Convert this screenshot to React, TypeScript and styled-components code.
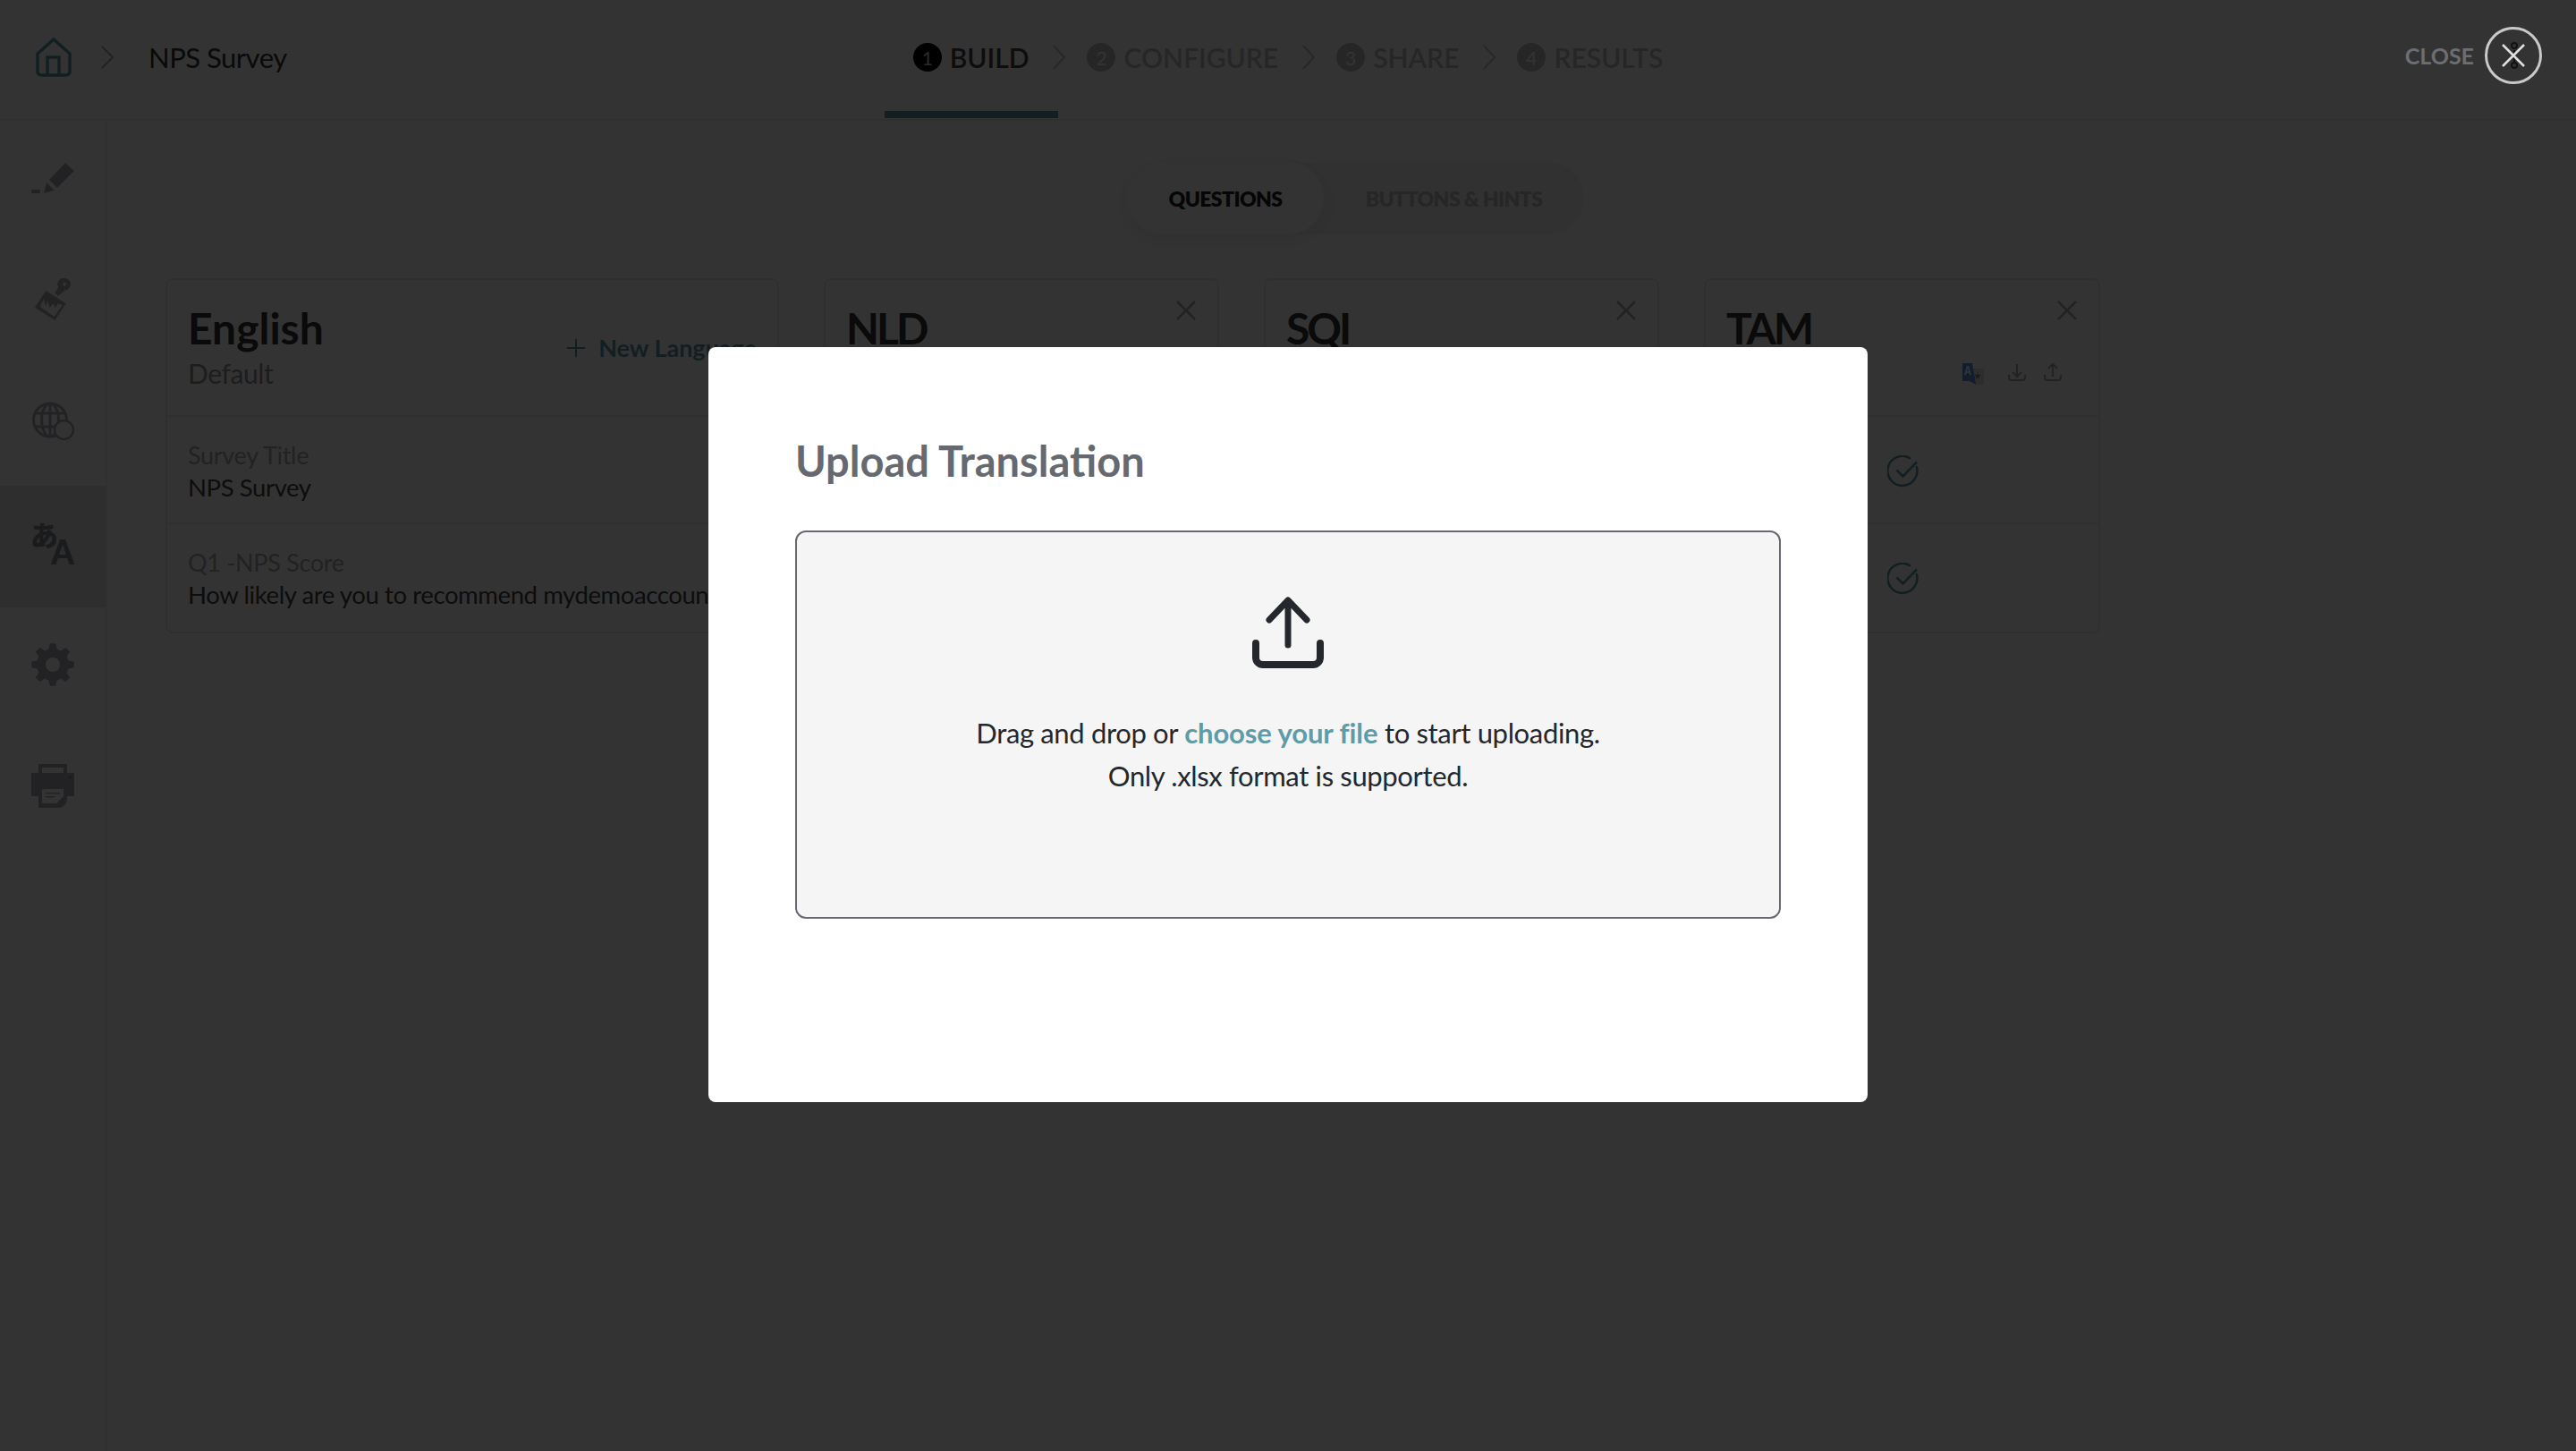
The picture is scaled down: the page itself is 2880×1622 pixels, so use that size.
import React from "react";
import styled, { createGlobalStyle } from "styled-components";

const FONT = `"Lato", "Noto Sans", "Liberation Sans", sans-serif`;

const Global = createGlobalStyle`
  html, body { margin: 0; padding: 0; background: #fff; }
  * { box-sizing: border-box; }
  body { font-family: ${FONT}; }
`;

const Page = styled.div`
  position: relative;
  width: 2880px;
  height: 1622px;
  overflow: hidden;
  background: #fff;
  display: flex;
  flex-direction: column;
`;

const Header = styled.header`
  height: 135px;
  flex: none;
  display: grid;
  grid-template-columns: 1fr auto 1fr;
  align-items: start;
  border-bottom: 2px solid #eee;
`;

const Crumbs = styled.div`
  display: flex;
  align-items: center;
  height: 128px;
  padding-left: 40px;
`;

const CrumbChevron = styled.svg`
  margin-left: 33px;
`;

const CrumbTitle = styled.span`
  font-size: 31px;
  color: #333;
  margin-left: 39px;
  letter-spacing: -0.5px;
`;

const Steps = styled.nav`
  display: flex;
  align-items: flex-start;
`;

const Step = styled.div<{ $active?: boolean }>`
  height: 133px;
  display: flex;
  align-items: flex-start;
  padding: 48px 0 0 ${(p) => (p.$active ? "32px" : "0")};
  margin-left: ${(p) => (p.$active ? "-32px" : "0")};
  gap: 9px;
  position: relative;
  color: ${(p) => (p.$active ? "#444" : "#bebebe")};
  ${(p) =>
    p.$active
      ? `&::after { content: ""; position: absolute; left: 0; bottom: 1px; width: 194px; height: 8px; background: #5d9ca8; }`
      : ""}
`;

const StepNumber = styled.span<{ $active?: boolean }>`
  width: 32px;
  height: 32px;
  border-radius: 50%;
  background: ${(p) => (p.$active ? "#000" : "#bebebe")};
  color: ${(p) => (p.$active ? "#ccc" : "#fff")};
  font-size: 21px;
  display: flex;
  align-items: center;
  justify-content: center;
`;

const StepLabel = styled.span`
  font-size: 30px;
  line-height: 32px;
  letter-spacing: 0;
  font-weight: 600;
`;

const StepChevron = styled.svg`
  width: 14px;
  height: 28px;
  margin: 50px 24px 0 27px;
  flex: none;
`;

const CloseSlot = styled.div`
  display: flex;
  justify-content: flex-end;
`;

const Body = styled.div`
  flex: 1;
  display: flex;
  min-height: 0;
`;

const Sidebar = styled.aside`
  width: 120px;
  flex: none;
  border-right: 2px solid #eee;
`;

const SideItem = styled.div<{ $active?: boolean }>`
  height: 136px;
  padding-bottom: 9px;
  display: flex;
  align-items: center;
  justify-content: center;
  background: ${(p) => (p.$active ? "#e6e6e6" : "transparent")};
`;

const Translate = styled.div`
  width: 48px;
  height: 45px;
  color: #84888f;
  display: flex;
  flex-direction: column;
`;

const TranslateKana = styled.span`
  font-family: "Noto Sans CJK JP", sans-serif;
  font-size: 31px;
  line-height: 26px;
  height: 26px;
  font-weight: 900;
  margin-left: -1px;
`;

const TranslateLatin = styled.span`
  align-self: flex-end;
  font-size: 37px;
  line-height: 12px;
  height: 12px;
  margin-top: 1px;
  font-weight: 900;
`;

const Main = styled.main`
  flex: 1;
  min-width: 0;
  padding: 46px 0 0 65px;
`;

const TabsRow = styled.div`
  display: flex;
  padding-left: 1075px;
`;

const TabGroup = styled.div`
  width: 511px;
  height: 81px;
  border-radius: 40px;
  background: #f4f4f4;
  display: flex;
`;

const Tab = styled.div<{ $active?: boolean }>`
  height: 81px;
  width: ${(p) => (p.$active ? "220px" : "291px")};
  border-radius: 40px;
  display: flex;
  align-items: center;
  justify-content: center;
  font-size: 23px;
  font-weight: 800;
  letter-spacing: -0.6px;
  color: ${(p) => (p.$active ? "#222" : "#bdbdbd")};
  background: ${(p) => (p.$active ? "#fff" : "transparent")};
  box-shadow: ${(p) => (p.$active ? "0 6px 24px rgba(0,0,0,.08)" : "none")};
`;

const Cards = styled.div`
  display: flex;
  gap: 50px;
  margin-top: 49px;
`;

const Card = styled.section<{ $width: number }>`
  width: ${(p) => p.$width}px;
  border: 2px solid #eaeaea;
  border-radius: 8px;
  flex: none;
`;

const DefaultHead = styled.div`
  height: 153px;
  padding: 26px 23px 0;
  border-bottom: 2px solid #eee;
  display: flex;
  justify-content: space-between;
  align-items: flex-start;
`;

const LangHead = styled.div`
  height: 153px;
  padding: 26px 24px 0 23px;
  border-bottom: 2px solid #eee;
`;

const LangTitleRow = styled.div`
  display: flex;
  justify-content: space-between;
  align-items: flex-start;
`;

const CardTitle = styled.h2<{ $tight?: boolean }>`
  margin: 0;
  font-size: 48px;
  line-height: 56px;
  font-weight: 700;
  letter-spacing: ${(p) => (p.$tight ? "-3px" : "0")};
  color: #333;
`;

const CardSub = styled.div`
  margin-top: 3px;
  font-size: 30px;
  line-height: 38px;
  color: #909090;
  letter-spacing: -0.4px;
`;

const AddLanguage = styled.div`
  margin-top: 33px;
  display: flex;
  align-items: center;
  gap: 15px;
  color: #5d9ca8;
  font-size: 27px;
  line-height: 34px;
  font-weight: 700;
  white-space: nowrap;
`;

const RemoveIcon = styled.svg`
  margin-top: -3px;
  flex: none;
`;

const HeadTools = styled.div`
  margin: 11px 17px 0 0;
  display: flex;
  justify-content: flex-end;
  gap: 20px;
  align-items: flex-start;
`;

const BadgeIcon = styled.svg`
  margin-right: 7px;
`;

const Row = styled.div<{ $last?: boolean }>`
  height: 120px;
  padding: 25px 0 0 23px;
  white-space: nowrap;
  border-bottom: ${(p) => (p.$last ? "none" : "2px solid #eee")};
`;

const RowLabel = styled.div`
  font-size: 27px;
  line-height: 36px;
  color: #aaa;
  letter-spacing: -0.3px;
`;

const RowValue = styled.div`
  font-size: 27.500px;
  line-height: 36px;
  color: #444;
  letter-spacing: -0.4px;
`;

const StatusRow = styled.div<{ $last?: boolean }>`
  height: 120px;
  padding: 43px 0 0 203px;
  border-bottom: ${(p) => (p.$last ? "none" : "2px solid #eee")};
`;

const Overlay = styled.div`
  position: absolute;
  inset: 0;
  background: rgba(0, 0, 0, 0.8);
  display: flex;
  justify-content: center;
  align-items: flex-start;
  padding-top: 388px;
`;

const Modal = styled.div`
  width: 1296px;
  height: 844px;
  background: #fff;
  border-radius: 8px;
  padding: 96px 97px 0;
`;

const ModalTitle = styled.h1`
  margin: 0 0 47px;
  font-size: 47px;
  line-height: 62px;
  font-weight: 700;
  color: #666a70;
`;

const Dropzone = styled.div`
  height: 434px;
  background: #f5f5f5;
  border: 2px solid #666a70;
  border-radius: 12px;
  display: flex;
  flex-direction: column;
  align-items: center;
  padding-top: 72px;
`;

const DropText = styled.p`
  margin: 48px 0 0;
  font-size: 31px;
  line-height: 48px;
  color: #24282d;
  text-align: center;
  letter-spacing: -0.35px;
`;

const FileLink = styled.span`
  color: #5d9ca8;
  font-weight: 700;
  letter-spacing: -0.1px;
`;

const CloseControl = styled.div`
  position: absolute;
  top: 30px;
  right: 38px;
  display: flex;
  align-items: center;
  gap: 12px;
`;

const CloseLabel = styled.span`
  font-size: 25px;
  font-weight: 700;
  color: #6b6e74;
`;

const CloseRing = styled.div`
  width: 64px;
  height: 64px;
  border: 3px solid #c9c9c9;
  border-radius: 50%;
  display: flex;
  align-items: center;
  justify-content: center;
`;

const Chevron = () => (
  <StepChevron viewBox="0 0 14 28" fill="none" stroke="#c4c4c4" strokeWidth="2">
    <path d="M1 1l12 13L1 27" />
  </StepChevron>
);

const Remove = () => (
  <RemoveIcon width="22" height="22" viewBox="0 0 22 22" fill="none" stroke="#aaa" strokeWidth="2.500">
    <path d="M1 1l20 20M21 1L1 21" />
  </RemoveIcon>
);

const Check = () => (
  <svg width="36" height="36" viewBox="0 0 36 36" fill="none" stroke="#5d9ca8" strokeWidth="2.600">
    <path d="M32.500 12A16.500 16.500 0 1 1 26 3.600" />
    <path d="M10.500 16.500l7 7L33 7.500" />
  </svg>
);

const GREY = "#a8acb4";

const PencilIcon = () => (
  <svg width="48" height="34" viewBox="0 0 48 34" fill={GREY}>
    <path d="M38 0l10 9-19 19-9-9zM17 22l9 9-12 3z" />
    <rect x="0" y="30" width="10" height="4" rx="1" />
  </svg>
);

const BrushIcon = () => (
  <svg width="40" height="47" viewBox="0 0 40 47" fill={GREY}>
    <path
      fillRule="evenodd"
      d="M33.300 0a6.700 6.700 0 1 1 0 13.400l-7 6.500-4-3.500 4-6.300A6.700 6.700 0 0 1 33.300 0zM33.300 4.700a2 2 0 1 0 0 4 2 2 0 0 0 0-4z"
    />
    <path
      fillRule="evenodd"
      d="M12.300 14l22.400 14.300L22.300 47 0 32.700zM9.700 23.300L5.700 31.700 21.700 43l9-13-5-1.700-2.400 5-3.300-5-3.300 5-2.700-8.300-1.700 6.700z"
    />
  </svg>
);

const GlobeIcon = () => (
  <svg width="48" height="44" viewBox="0 0 48 44" fill="none" stroke={GREY} strokeWidth="3">
    <circle cx="21" cy="20.500" r="18.500" />
    <ellipse cx="21" cy="20.500" rx="9.500" ry="18.500" />
    <path d="M21 2v37M4 13h34M4 28h34" />
    <circle cx="36.500" cy="31.500" r="10.500" fill="#fff" strokeWidth="2.500" />
  </svg>
);

const gearPath = () => {
  const pt = (r: number, deg: number) => {
    const a = ((deg - 90) * Math.PI) / 180;
    return `${(24 + r * Math.cos(a)).toFixed(1)} ${(24 + r * Math.sin(a)).toFixed(1)}`;
  };
  let d = "";
  for (let i = 0; i < 8; i++) {
    const c = i * 45;
    d += `${i === 0 ? "M" : "L"}${pt(18, c - 15)}L${pt(24, c - 8)}L${pt(24, c + 8)}L${pt(18, c + 15)}`;
  }
  return `${d}ZM24 16a8 8 0 1 0 0 16 8 8 0 0 0 0-16z`;
};

const GearIcon = () => (
  <svg width="48" height="48" viewBox="0 0 48 48" fill={GREY}>
    <path fillRule="evenodd" d={gearPath()} />
  </svg>
);

const PrinterIcon = () => (
  <svg width="48" height="49" viewBox="0 0 48 49">
    <path
      fill={GREY}
      fillRule="evenodd"
      d="M8 0h32v10H48v26h-8v3c0 5-4 10-10 10H8V36H0V10h8zM12 4v6h24V4z"
    />
    <path fill="#fff" d="M12 28h24v8l-8 8H12z" />
    <path fill={GREY} d="M16 32h16v1.500H16zM16 36h10v1.500H16z" />
    <circle cx="43.500" cy="15" r="1.200" fill="#666" />
  </svg>
);

const HomeIcon = () => (
  <svg width="40" height="44" viewBox="0 0 40 44" fill="none" stroke="#5d9ca8" strokeWidth="3.500">
    <path d="M2 18L20 2l18 16v20a4 4 0 0 1-4 4H6a4 4 0 0 1-4-4z" />
    <path d="M13 42V22h13v20" />
  </svg>
);

const TranslateBadge = () => (
  <BadgeIcon width="24" height="24" viewBox="0 0 24 24">
    <path fill="#e2e2e2" d="M10 6h14v18H14z" />
    <path fill="#888" d="M17 10l1 3h3l-2.500 2 1 3-2.500-2-2.500 2 1-3-2.500-2h3z" />
    <path fill="#5a90e8" d="M0 0h11l4 24-7-4H0z" />
    <path fill="#fff" d="M5 3h2l3 10H8l-.5-2h-3L4 13H2zM5 9h2L6 5z" />
  </BadgeIcon>
);

const ToolIcon = ({ up }: { up?: boolean }) => (
  <svg width="20" height="20" viewBox="0 0 20 20" fill="none" stroke="#aaa" strokeWidth="2">
    <path d="M1 13v3a3 3 0 0 0 3 3h12a3 3 0 0 0 3-3v-3" />
    {up ? <path d="M10 15V1M5 6l5-5 5 5" /> : <path d="M10 1v14M5 10l5 5 5-5" />}
  </svg>
);

const languages = [
  { code: "NLD", width: 442 },
  { code: "SQI", width: 442 },
  { code: "TAM", width: 443 },
];

export default function App() {
  return (
    <Page>
      <Global />
      <Header>
        <Crumbs>
          <HomeIcon />
          <CrumbChevron width="14" height="26" viewBox="0 0 14 26" fill="none" stroke="#aaa" strokeWidth="2">
            <path d="M1 1l12 12L1 25" />
          </CrumbChevron>
          <CrumbTitle>NPS Survey</CrumbTitle>
        </Crumbs>
        <Steps>
          <Step $active>
            <StepNumber $active>1</StepNumber>
            <StepLabel>BUILD</StepLabel>
          </Step>
          <Chevron />
          <Step>
            <StepNumber>2</StepNumber>
            <StepLabel>CONFIGURE</StepLabel>
          </Step>
          <Chevron />
          <Step>
            <StepNumber>3</StepNumber>
            <StepLabel>SHARE</StepLabel>
          </Step>
          <Chevron />
          <Step>
            <StepNumber>4</StepNumber>
            <StepLabel>RESULTS</StepLabel>
          </Step>
        </Steps>
        <CloseSlot />
      </Header>
      <Body>
        <Sidebar>
          <SideItem><PencilIcon /></SideItem>
          <SideItem><BrushIcon /></SideItem>
          <SideItem><GlobeIcon /></SideItem>
          <SideItem $active>
            <Translate>
              <TranslateKana>あ</TranslateKana>
              <TranslateLatin>A</TranslateLatin>
            </Translate>
          </SideItem>
          <SideItem><GearIcon /></SideItem>
          <SideItem><PrinterIcon /></SideItem>
        </Sidebar>
        <Main>
          <TabsRow>
            <TabGroup>
              <Tab $active>QUESTIONS</Tab>
              <Tab>BUTTONS &amp; HINTS</Tab>
            </TabGroup>
          </TabsRow>
          <Cards>
            <Card $width={686}>
              <DefaultHead>
                <div>
                  <CardTitle>English</CardTitle>
                  <CardSub>Default</CardSub>
                </div>
                <AddLanguage>
                  <svg width="20" height="20" viewBox="0 0 20 20" stroke="#5d9ca8" strokeWidth="2">
                    <path d="M10 0v20M0 10h20" />
                  </svg>
                  New Language
                </AddLanguage>
              </DefaultHead>
              <Row>
                <RowLabel>Survey Title</RowLabel>
                <RowValue>NPS Survey</RowValue>
              </Row>
              <Row $last>
                <RowLabel>Q1 -NPS Score</RowLabel>
                <RowValue>How likely are you to recommend mydemoaccount to a friend or colleague?</RowValue>
              </Row>
            </Card>
            {languages.map((l) => (
              <Card key={l.code} $width={l.width}>
                <LangHead>
                  <LangTitleRow>
                    <CardTitle $tight>{l.code}</CardTitle>
                    <Remove />
                  </LangTitleRow>
                  <HeadTools>
                    <TranslateBadge />
                    <ToolIcon />
                    <ToolIcon up />
                  </HeadTools>
                </LangHead>
                <StatusRow><Check /></StatusRow>
                <StatusRow $last><Check /></StatusRow>
              </Card>
            ))}
          </Cards>
        </Main>
      </Body>
      <Overlay>
        <Modal>
          <ModalTitle>Upload Translation</ModalTitle>
          <Dropzone>
            <svg width="80" height="80" viewBox="0 0 80 80" fill="none" stroke="#24282d" strokeWidth="7" strokeLinecap="round" strokeLinejoin="round">
              <path d="M40 54V5M19 26L40 4l21 22" />
              <path d="M4 52v16a8 8 0 0 0 8 8h56a8 8 0 0 0 8-8V52" strokeWidth="8" />
            </svg>
            <DropText>
              Drag and drop or <FileLink>choose your file</FileLink> to start uploading.
              <br />
              Only .xlsx format is supported.
            </DropText>
          </Dropzone>
        </Modal>
      </Overlay>
      <CloseControl>
        <CloseLabel>CLOSE</CloseLabel>
        <CloseRing>
          <svg width="32" height="36" viewBox="0 0 32 36" fill="none">
            <g stroke="#111" strokeWidth="2">
              <circle cx="17" cy="7" r="3" />
              <circle cx="17" cy="29" r="3" />
              <path d="M17 12v13" />
            </g>
            <path d="M4 6l24 24M28 6L4 30" stroke="#e0e0e0" strokeWidth="2.500" />
          </svg>
        </CloseRing>
      </CloseControl>
    </Page>
  );
}
